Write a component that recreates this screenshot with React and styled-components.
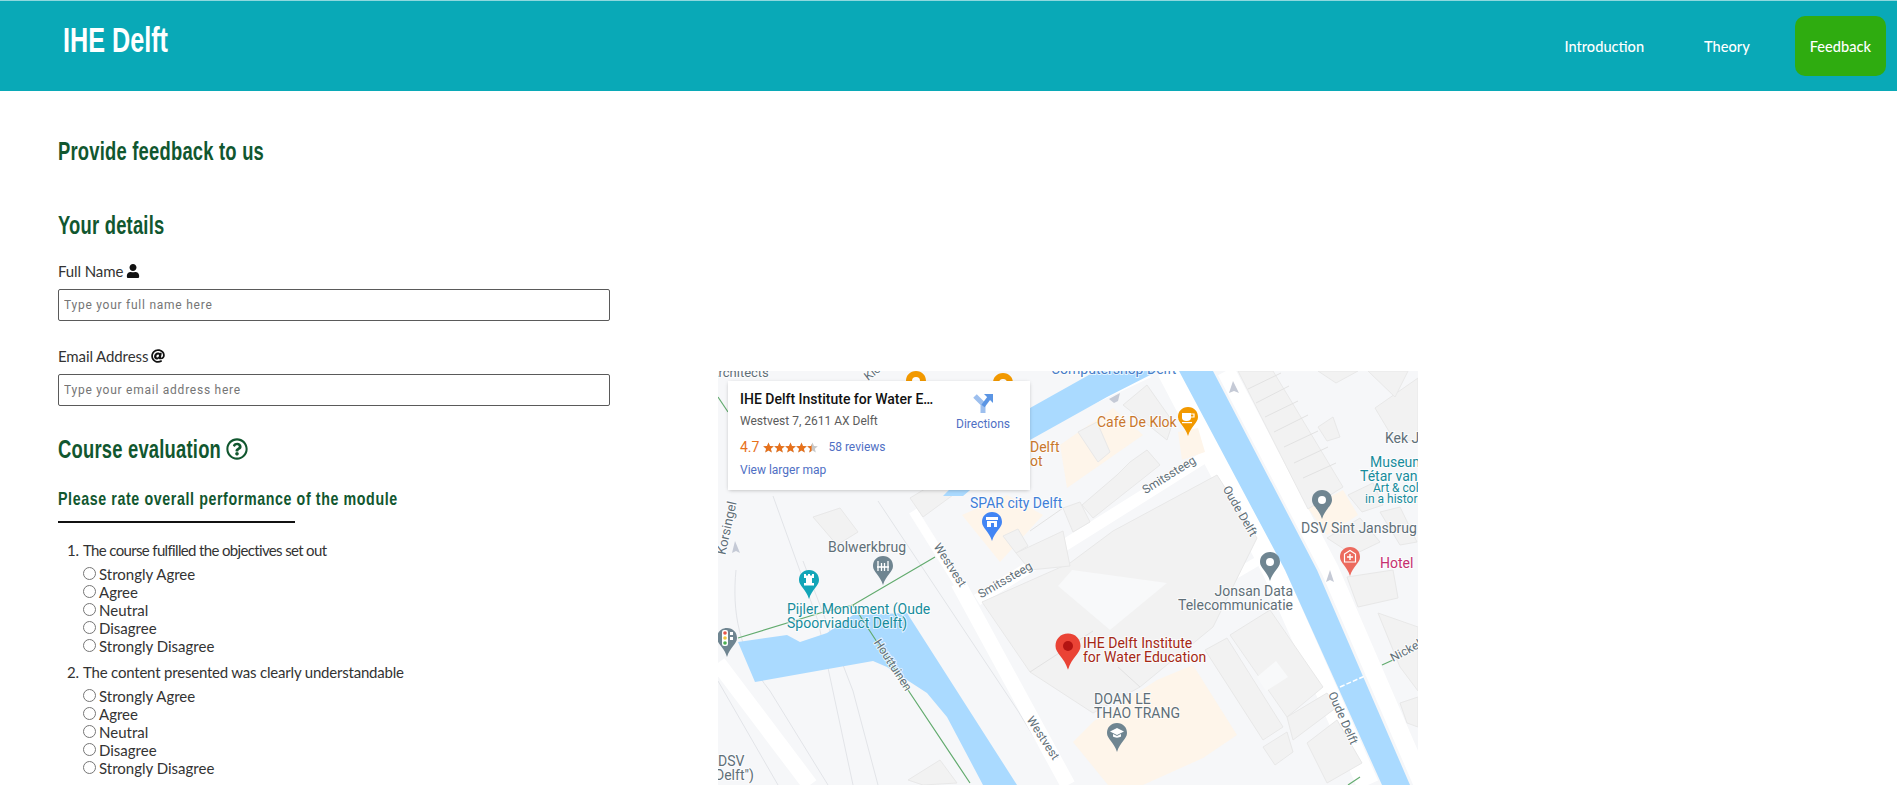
import React from "react";
import styled, { createGlobalStyle } from "styled-components";
import { FaUser, FaAt, FaRegQuestionCircle } from "react-icons/fa";

const GlobalStyle = createGlobalStyle`
  html, body {
    margin: 0;
    padding: 0;
    background: #fff;
    overflow: hidden;
  }
  body {
    font-family: "Lato", "Liberation Sans", sans-serif;
    color: #333;
  }
`;

const Page = styled.div`
  width: 1897px;
  height: 785px;
  overflow: hidden;
`;

const Header = styled.header`
  height: 90px;
  border-top: 1px solid #8fd8de;
  background: #09a9b7;
  display: flex;
  justify-content: space-between;
`;

/* no condensed family is installed, so the display text is squeezed */
const Condensed = styled.span`
  display: inline-block;
  white-space: nowrap;
  transform: scaleX(${(p) => p.$scale || 0.735});
  transform-origin: left center;
`;

const Brand = styled.h1`
  margin: 0;
  padding: 20px 0 0 63px;
  font-family: "Liberation Sans", sans-serif;
  font-weight: 700;
  font-size: 35px;
  line-height: 38px;
  color: #fff;
`;

const Nav = styled.nav`
  display: flex;
  align-items: flex-start;
  gap: 30px;
  padding: 15px 11px 0 0;
`;

const NavLink = styled.a`
  height: 60px;
  padding: 0 15px;
  display: flex;
  align-items: center;
  font-size: 14.6px;
  font-weight: 500;
  color: #fff;
  border-radius: 10px;
  background: ${(p) => (p.$active ? "#2fac10" : "transparent")};
`;

const Main = styled.main`
  display: grid;
  grid-template-columns: 552px 700px;
  column-gap: 108px;
  padding-left: 58px;
`;

const FormColumn = styled.section`
  padding-top: 46px;
`;

const Heading = styled.h2`
  margin: 0;
  font-family: "Liberation Sans", sans-serif;
  font-weight: 700;
  font-size: 25px;
  line-height: 28px;
  letter-spacing: 0.3px;
  color: #11572f;
  display: flex;
  align-items: center;
`;

const SubHeading = styled(Heading).attrs({ as: "h3" })`
  font-size: 19px;
  line-height: 22px;
  letter-spacing: 0.8px;
`;

const PageTitle = styled(Heading)`
  margin-bottom: 46px;
`;

const Field = styled.div`
  margin-top: ${(p) => p.$top}px;
`;

const Label = styled.label`
  display: flex;
  align-items: center;
  gap: 3px;
  height: 20px;
  font-size: 15px;
  letter-spacing: -0.1px;
  svg {
    color: #111;
    font-size: 14px;
  }
`;

const TextInput = styled.input`
  display: block;
  box-sizing: border-box;
  width: 552px;
  height: 32px;
  margin-top: 8px;
  padding: 0 5px;
  border: 1px solid #5a5a5a;
  border-radius: 2px;
  font-family: "Roboto", sans-serif;
  font-size: 12px;
  letter-spacing: 0.75px;
  &::placeholder {
    color: #757575;
    opacity: 1;
  }
`;

const HelpIcon = styled(FaRegQuestionCircle)`
  font-size: 22px;
  margin-left: -54px;
`;

const Rule = styled.hr`
  width: 237px;
  height: 2px;
  margin: 11px 0 0;
  border: 0;
  background: #111;
`;

const Questions = styled.ol`
  margin: 18px 0 0;
  padding: 0 0 0 25px;
  font-size: 15px;
  line-height: 18px;
`;

const Question = styled.li`
  margin-bottom: 8px;
`;

const QuestionText = styled.span`
  letter-spacing: ${(p) => p.$spacing}px;
`;

const Options = styled.div`
  margin-top: 6px;
`;

const Option = styled.label`
  display: flex;
  align-items: center;
  height: 18px;
  input {
    margin: 0 3px 2px 0;
  }
`;

const MapFrame = styled.div`
  position: relative;
  height: 414px;
  margin-top: 280px;
  overflow: hidden;
  background: #f6f7f9;
  font-family: "Roboto", sans-serif;
`;

const MapCanvas = styled.svg`
  display: block;
  width: 700px;
  height: 414px;
`;

const MapText = styled.text`
  font-family: "Roboto", sans-serif;
  font-size: ${(p) => p.$size || 14}px;
  fill: ${(p) => p.$color || "#5f6f78"};
  paint-order: stroke;
  stroke: #fff;
  stroke-width: 2px;
  stroke-opacity: 0.7;
`;

const PlaceCard = styled.div`
  position: absolute;
  left: 10px;
  top: 10px;
  box-sizing: border-box;
  width: 302px;
  height: 109px;
  padding: 9px 18px 9px 12px;
  background: #fff;
  box-shadow: 0 1px 4px -1px rgba(0, 0, 0, 0.3);
  display: flex;
  justify-content: space-between;
`;

const PlaceName = styled.div`
  width: 196px;
  font-size: 14px;
  font-weight: 500;
  line-height: 18px;
  color: #111;
  white-space: nowrap;
  overflow: hidden;
  text-overflow: ellipsis;
`;

const PlaceAddress = styled.div`
  margin-top: 5px;
  font-size: 12px;
  line-height: 16px;
  color: #5b5b5b;
`;

const RatingRow = styled.div`
  display: flex;
  align-items: center;
  margin-top: 9px;
  height: 18px;
`;

const RatingValue = styled.span`
  font-size: 14px;
  color: #e7711b;
  margin-right: 4px;
`;

const CardLink = styled.a`
  font-size: 12px;
  line-height: 16px;
  color: #4f6fc4;
`;

const ReviewsLink = styled(CardLink)`
  margin-left: 10px;
`;

const LargerMap = styled(CardLink)`
  display: block;
  margin-top: 6px;
`;

const Directions = styled.div`
  width: 58px;
  display: flex;
  flex-direction: column;
  align-items: center;
  margin-top: 2px;
  font-size: 12px;
  color: #4f6fc4;
  gap: 3px;
`;

const options = ["Strongly Agree", "Agree", "Neutral", "Disagree", "Strongly Disagree"];

const questions = [
  { text: "The course fulfilled the objectives set out", spacing: -0.65 },
  { text: "The content presented was clearly understandable", spacing: -0.2 },
];

const cream = [
  "342,74 395,37 425,64 349,117",
  "460,61 480,57 487,81 464,89",
  "244,144 289,124 325,144 282,191",
  "590,137 625,119 640,144 609,164",
  "355,371 376,350 439,309 475,294 519,364 485,387 425,414 390,414",
];

const buildings = [
  "264,231 352,192 395,160 499,104 539,167 495,256 422,316 375,342 312,301",
  "487,279 509,267 565,356 545,369",
  "512,264 552,239 605,316 569,346",
  "569,346 609,322 619,336 575,369",
  "545,376 569,361 575,381 557,394",
  "589,372 619,349 644,392 609,412",
  "364,134 399,104 412,91 429,79 442,94 375,147",
  "345,137 362,131 372,151 355,161",
  "360,61 379,51 392,81 380,91",
  "405,34 429,14 455,51 449,69",
  "520,0 555,0 625,116 590,138",
  "630,124 655,112 665,134 644,141",
  "657,37 700,7 700,71 675,67",
  "600,56 615,46 622,66 609,70",
  "662,141 682,136 699,171 682,174",
  "609,167 642,147 662,171 635,184",
  "629,206 675,199 680,227 640,236",
  "660,242 700,256 700,320 682,296",
  "682,332 700,326 700,356 689,352",
  "95,146 122,137 140,161 119,174",
  "285,165 300,158 310,175 298,182",
  "298,182 345,160 352,195 312,199",
  "192,127 225,107 235,124 205,146",
  "190,409 222,389 239,412 205,414",
  "600,0 640,0 618,12",
  "650,0 690,0 677,26",
];

const courtyards = [
  "354,199 449,212 392,259 340,215",
  "539,306 558,290 570,306 548,320",
];

const MapPin = ({ x, y, color, r = 10, dot = "#fff", children }) => (
  <g transform={`translate(${x} ${y}) scale(${r / 10})`}>
    <path
      d="M0 -10 C6 -10 10 -5.6 10 0 C10 6 3 9 0 19 C-3 9 -10 6 -10 0 C-10 -5.6 -6 -10 0 -10Z"
      fill={color}
    />
    {children || <circle r="4" fill={dot} />}
  </g>
);

const Stars = () => (
  <svg width="55" height="11" viewBox="0 0 60 12">
    <defs>
      <clipPath id="rating-clip">
        <rect width="53" height="12" />
      </clipPath>
    </defs>
    {[0, 1, 2, 3, 4].map((i) => (
      <polygon
        key={i}
        transform={`translate(${i * 12} 0)`}
        points="6,0.5 7.6,4.4 11.8,4.7 8.6,7.4 9.6,11.5 6,9.3 2.4,11.5 3.4,7.4 0.2,4.7 4.4,4.4"
        fill="#c8c8c8"
      />
    ))}
    <g clipPath="url(#rating-clip)">
      {[0, 1, 2, 3, 4].map((i) => (
        <polygon
          key={i}
          transform={`translate(${i * 12} 0)`}
          points="6,0.5 7.6,4.4 11.8,4.7 8.6,7.4 9.6,11.5 6,9.3 2.4,11.5 3.4,7.4 0.2,4.7 4.4,4.4"
          fill="#e7711b"
        />
      ))}
    </g>
  </svg>
);

const DirectionsIcon = () => (
  <svg width="22" height="22" viewBox="0 0 22 22">
    <path d="M11 21V12L3 4" fill="none" stroke="#9dbfee" strokeWidth="5" />
    <path d="M11 14L17 6" fill="none" stroke="#5b95e4" strokeWidth="4" />
    <path d="M12 2H21V11Z" fill="#5b95e4" />
  </svg>
);

const MapDrawing = () => (
  <MapCanvas viewBox="0 0 700 414">
    <rect width="700" height="414" fill="#f6f7f9" />

    {/* thin side roads */}
    <g fill="none" stroke="#e2e4e8" strokeWidth="1">
      <path d="M18 199C14 240 20 280 52 320L110 414" />
      <path d="M85 190L135 320L160 414" />
      <path d="M55 125L100 250L135 414" />
      <path d="M0 310L60 414" />
      <path d="M160 130L300 340L345 414" />
    </g>

    {/* streets */}
    <g fill="none" stroke="#fff">
      <path d="M0 292L92 414" strokeWidth="16" />
      <path d="M195 140L240 212" strokeWidth="9" />
      <path d="M240 212L350 414" strokeWidth="15" />
      <path d="M259 229L342 177L490 84" strokeWidth="12" />
      <path d="M450 0L522 137L555 199L650 414" strokeWidth="22" />
      <path d="M508 0L612 199L705 414" strokeWidth="18" />
      <path d="M320 52L430 0" strokeWidth="14" />
      <path d="M540 190L480 225" strokeWidth="9" />
    </g>

    {cream.map((p) => (
      <polygon key={p} points={p} fill="#fef5ea" />
    ))}
    {buildings.map((p) => (
      <polygon key={p} points={p} fill="#f2f2f2" stroke="#e8e8e8" strokeWidth="1" />
    ))}
    {courtyards.map((p) => (
      <polygon key={p} points={p} fill="#f8f9fa" />
    ))}

    <g stroke="#e2e2e2" strokeWidth="1">
      <path d="M530 18L563 2M538 32L571 15M547 46L580 30M556 61L590 44M566 76L600 60M576 92L610 76M585 107L618 92" />
      <path d="M312 301L375 260M422 316L400 296M345 137L312 160" />
    </g>

    {/* water */}
    <g fill="#aadaff">
      <polygon points="461,0 495,0 599,199 692,414 664,414 567,199" />
      <polygon points="378,0 440,0 389,26 312,69 245,125 225,125 312,37" />
      <polygon points="20,271 69,264 82,271 109,262 135,244 189,242 299,414 265,414 229,346 209,322 169,296 155,290 37,311" />
    </g>
    <path d="M622 316L649 304" stroke="#fff" strokeWidth="1.5" strokeDasharray="5 2" />

    {/* rail lines */}
    <g fill="none" stroke="#62ab6e" strokeWidth="1.2">
      <path d="M20 267L102 242L135 234L217 186" />
      <path d="M135 234L192 322L252 412" />
      <path d="M0 26L10 41" />
      <path d="M664 294L675 289" />
      <path d="M630 414L642 406" />
    </g>

    {/* one-way arrows */}
    <g fill="#c5cad6">
      <polygon points="391,28 402,22 400,30 396,32" />
      <polygon points="515,10 521,22 516,20 511,22" />
      <polygon points="17,170 22,182 18,180 14,182" />
      <polygon points="612,199 616,211 612,209 608,211" />
    </g>

    <MapPin x={198} y={10} color="#f29900" />
    <MapPin x={285} y={12} color="#f29900" />
    <MapPin x={470} y={46} color="#f29900">
      {/* cup */}
      <path d="M-6 -4H3V1C3 3 1 4 -1 4H-2C-4 4 -6 3 -6 1Z" fill="#fff" />
      <path d="M3 -3H6V0H3" fill="none" stroke="#fff" strokeWidth="1.2" />
      <rect x="-6" y="5" width="10" height="1.2" fill="#fff" />
    </MapPin>
    <MapPin x={274} y={151} color="#4285f4">
      {/* shop */}
      <path d="M-6 -5H6V-2H-6Z" fill="#fff" />
      <path d="M-5 -1H5V5H2V1H-1V5H-5Z" fill="#fff" />
    </MapPin>
    <MapPin x={165} y={195} color="#6f8591">
      {/* bridge */}
      <path d="M-5 -5V5M5 -5V5M-1.5 -3V5M1.5 -3V5" stroke="#fff" strokeWidth="1.3" />
      <path d="M-6 1H6" stroke="#fff" strokeWidth="1.6" />
    </MapPin>
    <MapPin x={91} y={209} color="#12a5b8">
      {/* tower */}
      <path d="M-5 -6H-3V-4.5H-1V-6H1V-4.5H3V-6H5V-2H3V3H5V5.5H-5V3H-3V-2H-5Z" fill="#fff" />
    </MapPin>
    <MapPin x={9} y={267} color="#6f8591">
      <rect x="-5" y="-8" width="6" height="16" rx="2" fill="#fff" />
      <circle cx="-2" cy="-5" r="1.8" fill="#e8554a" />
      <circle cx="-2" cy="0" r="1.8" fill="#f3c63c" />
      <circle cx="-2" cy="5" r="1.8" fill="#4caf50" />
      <path d="M3 -6H6V-3H3ZM3 -1H6V2H3Z" fill="#fff" />
    </MapPin>
    <MapPin x={604} y={129} color="#6f8591" />
    <MapPin x={552} y={191} color="#6f8591" />
    <MapPin x={632} y={186} color="#ec6a5e">
      {/* hospital sign */}
      <path d="M-5.5 -3L0 -6.5L5.5 -3V5H-5.5Z" fill="none" stroke="#fff" strokeWidth="1.2" />
      <path d="M0 -3V3M-3 0H3" stroke="#fff" strokeWidth="1.4" />
    </MapPin>
    <MapPin x={399} y={362} color="#6f8591">
      {/* cap */}
      <path d="M0 -5L7 -1.5L0 2L-7 -1.5Z" fill="#fff" />
      <path d="M-4 1V3.5C-2 5 2 5 4 3.5V1L0 3Z" fill="#fff" />
    </MapPin>
    <MapPin x={350} y={275} color="#ea4335" dot="#b31412" r={12.5} />

    <MapText x="-8" y="6" $size="13">Architects</MapText>
    <MapText x="150" y="10" $size="12" transform="rotate(-38 150 10)">Klok</MapText>
    <MapText x="333" y="3" $color="#4a7fc8">Computershop Delft</MapText>
    <MapText x="312" y="81" $color="#c9772c">Delft</MapText>
    <MapText x="312" y="95" $color="#c9772c">ot</MapText>
    <MapText x="379" y="56" $color="#c9772c">Café De Klok</MapText>
    <MapText x="252" y="137" $color="#3f7fd8">SPAR city Delft</MapText>
    <MapText x="110" y="181">Bolwerkbrug</MapText>
    <MapText x="69" y="243" $color="#178c9c">Pijler Monument (Oude</MapText>
    <MapText x="69" y="257" $color="#178c9c">Spoorviaduct Delft)</MapText>
    <MapText x="175" y="298" $size="12" textAnchor="middle" transform="rotate(57 175 294)">Houttuinen</MapText>
    <MapText x="232" y="198" $size="12" textAnchor="middle" transform="rotate(57 232 194)">Westvest</MapText>
    <MapText x="325" y="371" $size="12" textAnchor="middle" transform="rotate(57 325 367)">Westvest</MapText>
    <MapText x="287" y="213" $size="12" textAnchor="middle" transform="rotate(-30 287 209)">Smitssteeg</MapText>
    <MapText x="451" y="108" $size="12" textAnchor="middle" transform="rotate(-32 451 104)">Smitssteeg</MapText>
    <MapText x="522" y="144" $size="12" textAnchor="middle" transform="rotate(60 522 140)">Oude Delft</MapText>
    <MapText x="625" y="351" $size="12" textAnchor="middle" transform="rotate(66 625 347)">Oude Delft</MapText>
    <MapText x="9" y="161" $size="13" textAnchor="middle" transform="rotate(-78 9 157)">Korsingel</MapText>
    <MapText x="583" y="162">DSV Sint Jansbrug</MapText>
    <MapText x="667" y="72">Kek Jansen</MapText>
    <MapText x="652" y="96" $color="#178c9c">Museum</MapText>
    <MapText x="642" y="110" $color="#178c9c">Tétar van der Ven</MapText>
    <MapText x="655" y="121" $size="12" $color="#178c9c">Art &amp; collections</MapText>
    <MapText x="647" y="132" $size="12" $color="#178c9c">in a historic house</MapText>
    <MapText x="662" y="197" $color="#c5306f">Hotel</MapText>
    <MapText x="575" y="225" textAnchor="end">Jonsan Data</MapText>
    <MapText x="575" y="239" textAnchor="end">Telecommunicatie</MapText>
    <MapText x="365" y="277" $color="#a52714">IHE Delft Institute</MapText>
    <MapText x="365" y="291" $color="#a52714">for Water Education</MapText>
    <MapText x="376" y="333">DOAN LE</MapText>
    <MapText x="376" y="347">THAO TRANG</MapText>
    <MapText x="0" y="395">DSV</MapText>
    <MapText x="-3" y="409">Delft")</MapText>
    <MapText x="675" y="291" $size="12" transform="rotate(-28 675 291)">Nickelstraat</MapText>
  </MapCanvas>
);

const App = () => (
  <Page>
    <GlobalStyle />
    <Header>
      <Brand>
        <Condensed $scale={0.72}>IHE Delft</Condensed>
      </Brand>
      <Nav>
        <NavLink>Introduction</NavLink>
        <NavLink>Theory</NavLink>
        <NavLink $active>Feedback</NavLink>
      </Nav>
    </Header>
    <Main>
      <FormColumn>
        <PageTitle>
          <Condensed>Provide feedback to us</Condensed>
        </PageTitle>
        <Heading>
          <Condensed>Your details</Condensed>
        </Heading>
        <Field $top={22}>
          <Label>
            Full Name <FaUser />
          </Label>
          <TextInput placeholder="Type your full name here" />
        </Field>
        <Field $top={25}>
          <Label>
            Email Address <FaAt />
          </Label>
          <TextInput placeholder="Type your email address here" />
        </Field>
        <Field $top={29}>
          <Heading>
            <Condensed>Course evaluation</Condensed>
            <HelpIcon />
          </Heading>
        </Field>
        <Field $top={25}>
          <SubHeading>
            <Condensed $scale={0.75}>Please rate overall performance of the module</Condensed>
          </SubHeading>
        </Field>
        <Rule />
        <Questions>
          {questions.map((q, n) => (
            <Question key={q.text}>
              <QuestionText $spacing={q.spacing}>{q.text}</QuestionText>
              <Options>
                {options.map((o) => (
                  <Option key={o}>
                    <input type="radio" name={`q${n}`} />
                    {o}
                  </Option>
                ))}
              </Options>
            </Question>
          ))}
        </Questions>
      </FormColumn>
      <MapFrame>
        <MapDrawing />
        <PlaceCard>
          <div>
            <PlaceName>IHE Delft Institute for Water Education</PlaceName>
            <PlaceAddress>Westvest 7, 2611 AX Delft</PlaceAddress>
            <RatingRow>
              <RatingValue>4.7</RatingValue>
              <Stars />
              <ReviewsLink>58 reviews</ReviewsLink>
            </RatingRow>
            <LargerMap>View larger map</LargerMap>
          </div>
          <Directions>
            <DirectionsIcon />
            Directions
          </Directions>
        </PlaceCard>
      </MapFrame>
    </Main>
  </Page>
);

export default App;
